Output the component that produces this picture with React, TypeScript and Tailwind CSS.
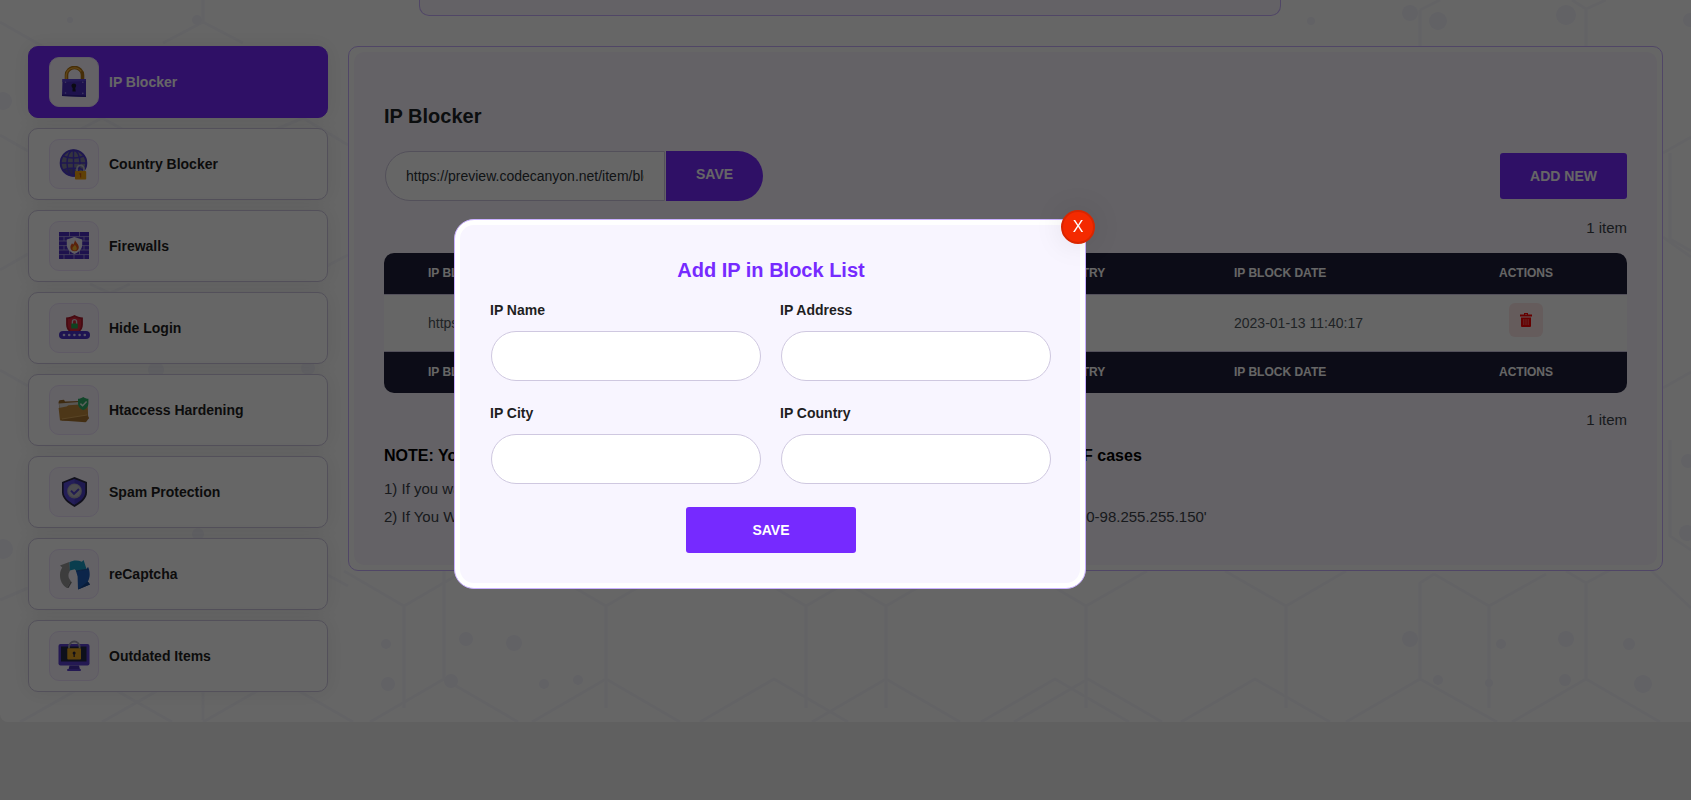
import React, { useState } from 'react';

interface MenuItem {
  id: string;
  label: string;
  icon: React.ReactNode;
}

const PadlockIcon = () => (
  <svg viewBox="0 0 32 32" className="w-8 h-8" aria-hidden="true">
    <path d="M8.5 14V9a8 7.5 0 0 1 16 0v5" fill="none" stroke="#b07414" strokeWidth="3.6" />
    <path d="M8.2 13V9a8.2 7.8 0 0 1 15-3.6" fill="none" stroke="#f0ac3a" strokeWidth="1.4" />
    <path d="M4.5 13H28v18l-24-1z" fill="#4b2fc0" />
    <path d="M4.5 13H28v2l-23.6 1z" fill="#5b41d6" />
    <path d="M4 28.5l24 1V31L4 30z" fill="#33209a" />
    <circle cx="15.8" cy="19.8" r="2.4" fill="#1d1b33" />
    <path d="M14.8 20.5h2.2l.8 5h-3.4z" fill="#1d1b33" />
    <g fill="#9d8cf2">
      <circle cx="7.5" cy="16.2" r=".8" />
      <circle cx="24.8" cy="16.2" r=".8" />
      <circle cx="7.5" cy="27" r=".8" />
      <circle cx="24.8" cy="27.4" r=".8" />
    </g>
  </svg>
);

const GlobeIcon = () => (
  <svg viewBox="0 0 32 32" className="w-8 h-8" aria-hidden="true">
    <circle cx="15.5" cy="15" r="13" fill="#83839c" />
    <path d="M5 22.500a13 13 0 0 0 13 5.500l-1-8z" fill="#3a2fa0" opacity=".6" />
    <g fill="none" stroke="#4d3ac8" strokeWidth="1.5">
      <circle cx="15.5" cy="15" r="12.8" strokeWidth="2" />
      <ellipse cx="15.5" cy="15" rx="6.5" ry="12.8" />
      <path d="M15.5 2v26M2.7 15h25.6M5 8c6 2.6 15 2.6 21 0M5 22c6-2.6 15-2.6 21 0" />
    </g>
    <path d="M19 23.5v-2.7a3.5 3.5 0 0 1 7 0v2.7" fill="none" stroke="#b9b9c6" strokeWidth="1.8" />
    <rect x="17" y="23" width="11.2" height="8.6" rx=".8" fill="#f0a010" />
    <path d="M21.4 25.2h1.8v4.4h-1v-3.2h-.8z" fill="#c04a10" />
  </svg>
);

const FirewallIcon = () => (
  <svg viewBox="0 0 32 32" className="w-8 h-8" aria-hidden="true">
    <rect x="1" y="2" width="30" height="27" fill="#4b2fc0" />
    <path
      d="M1 6.6h30M1 11h30M1 15.6h30M1 20h30M1 24.6h30M11.5 2v4.6M21.5 2v4.6M6 6.6V11M16 6.6V11M26 6.6V11M11.5 11v4.6M21.5 11v4.6M6 15.6V20M26 15.6V20M11.5 20v4.6M21.5 20v4.6M6 24.6V29M16 24.6V29M26 24.6V29"
      stroke="#a79ae0"
      strokeWidth=".9"
    />
    <path d="M16.5 7l7.7 2.6v5.2c0 4.2-3 7.4-7.7 9.2-4.7-1.8-7.7-5-7.7-9.2V9.6z" fill="#eeeaf8" />
    <path d="M17 9.8c.4 2.6 3.8 4 3.8 7.4 0 2.6-1.8 4-4.2 4s-4.2-1.4-4.2-4c0-1.8 1-2.6 1.6-4l1.2 1.2c1-1.2 1.6-2.6 1.8-4.6z" fill="#e0521c" />
    <path d="M17 14.6c.2 1.4 1.8 2.2 1.8 3.8 0 1.4-1 2.2-2.2 2.2s-2.2-.8-2.2-2.2c0-1.6 2-2.2 2.6-3.8z" fill="#f7b733" />
  </svg>
);

const HideLoginIcon = () => (
  <svg viewBox="0 0 32 32" className="w-8 h-8" aria-hidden="true">
    <path d="M16.5 3c2.6 1.6 5.4 2.3 8.4 2.4v7c0 3.2-1.4 6-4 7.8h-8.8c-2.6-1.8-4-4.6-4-7.8v-7c3-.1 5.8-.8 8.4-2.4z" fill="#b01c2e" />
    <path d="M16.5 5c2 1.2 4.2 1.8 6.6 2v5.6c0 2.8-1.2 5-3 6.600h-7.200c-1.800-1.600-3-3.800-3-6.600V7c2.400-.2 4.600-.8 6.600-2z" fill="#d92a3e" />
    <path d="M14.4 12V9.800a2.100 2.100 0 0 1 4.200 0V12" fill="none" stroke="#d5d5dd" strokeWidth="1.300" />
    <rect x="13.200" y="11.500" width="6.600" height="5" rx=".6" fill="#22a854" />
    <rect x="1" y="19" width="31" height="8" rx="4" fill="#4b33cc" />
    <g fill="#d8d2fa">
      <circle cx="6" cy="23" r="1.300" />
      <circle cx="11.200" cy="23" r="1.300" />
      <circle cx="16.400" cy="23" r="1.300" />
      <circle cx="21.600" cy="23" r="1.300" />
      <circle cx="26.800" cy="23" r="1.300" />
    </g>
  </svg>
);

const FolderIcon = () => (
  <svg viewBox="0 0 32 32" className="w-8 h-8" aria-hidden="true">
    <path d="M.5 8l1-1.800 4.500-.4 1 1.600 21-.6 2.500 18-27 2z" fill="#9a6a2a" />
    <path d="M1 9.500l26-2 1 5-26.500 2z" fill="#dcd6d0" />
    <path d="M.6 14l8-1.400 2-1.400 19-1.200.6 14.600L2 26.500z" fill="#c08a3c" />
    <path d="M2 25.500L29 21l2 3-2.500 3.500-1 .8L7 26.800z" fill="#a87430" />
    <path d="M4 25l25-4" stroke="#e4b264" strokeWidth=".8" />
    <path d="M25.200 3c1.600 1.200 3.400 1.700 5.200 1.800v4.600c0 3.200-2 5.400-5.200 6.800-3.200-1.400-5.200-3.600-5.200-6.800V4.800c1.800-.1 3.600-.6 5.200-1.800z" fill="#2fae6a" />
    <path d="M22.400 9.600l2.200 2.200 4-4.200" fill="none" stroke="#e4f4ea" strokeWidth="1.500" />
  </svg>
);

const SpamIcon = () => (
  <svg viewBox="0 0 32 32" className="w-8 h-8" aria-hidden="true">
    <path d="M16.500 1l12.500 5v10.500c0 6-6 11-12.500 14.500C10 27.500 4 22.500 4 16.500V6z" fill="#2c2a48" />
    <path d="M16.500 3l10.700 4.300v9c0 5-5 9.200-10.700 12.400C10.800 25.500 5.800 21.300 5.800 16.300v-9z" fill="#4d40c8" />
    <path d="M16.500 3v25.700C10.800 25.500 5.800 21.300 5.800 16.300v-9z" fill="#5a4cdc" />
    <circle cx="16.500" cy="15" r="7.400" fill="#a9a9b4" />
    <circle cx="16.500" cy="14.800" r="6.200" fill="#bcbcc6" />
    <path d="M13 14.600l3 3.200 5-4.800" fill="none" stroke="#5344cc" strokeWidth="2" />
  </svg>
);

const RecaptchaIcon = () => (
  <svg viewBox="0 0 32 32" className="w-8 h-8" aria-hidden="true">
    <path d="M2 7.500L11.200 4l.8 8.500-1.400 3.200c-.6 3 .4 5 2.200 7.300L9 30C4.500 27.500 1.800 22.500 2 17c0-3 .8-5.200 2.200-7.400z" fill="#9a9a98" />
    <path d="M9 30l3.800-7 1 1.600L10.500 30z" fill="#77777a" />
    <path d="M11.400 4.200c4-2.200 8.600-2.200 12.400-.4L25.600 2l3 9.200-10.400 1.800-1.400-1.800-5 1.400z" fill="#1b9cc4" />
    <path d="M18 13l10.600-1.800L30 8.800c2.200 4.600 2.400 10-.2 14.800l2.200 3-12 4.800-.4-13z" fill="#1f5db8" />
    <path d="M29.800 23.600l2.200 3-12 4.800z" fill="#17468f" />
    <path d="M18 13l12-2" stroke="#17468f" strokeWidth=".8" />
  </svg>
);

const OutdatedIcon = () => (
  <svg viewBox="0 0 32 32" className="w-8 h-8" aria-hidden="true">
    <rect x=".5" y="4" width="31" height="21.500" rx="2" fill="#5b3fd0" />
    <rect x="3" y="6.500" width="25.500" height="15" fill="#252a44" />
    <path d="M11.500 25.500h9.500l1 4H10.500z" fill="#4730ae" />
    <rect x="9" y="29" width="14" height="2" rx="1" fill="#5b3fd0" />
    <path d="M11 8.500V6.800a5.300 5.300 0 0 1 10.600 0v1.700" fill="none" stroke="#9d9bb0" strokeWidth="1.800" />
    <rect x="9.300" y="8.300" width="13.700" height="11.200" rx=".8" fill="#e5a41f" />
    <circle cx="16.100" cy="13" r="1.500" fill="#2a2538" />
    <path d="M15.500 13.500h1.300v3.500h-1.300z" fill="#2a2538" />
  </svg>
);

const menuItems: MenuItem[] = [
  { id: 'ip', label: 'IP Blocker', icon: <PadlockIcon /> },
  { id: 'country', label: 'Country Blocker', icon: <GlobeIcon /> },
  { id: 'firewalls', label: 'Firewalls', icon: <FirewallIcon /> },
  { id: 'hide-login', label: 'Hide Login', icon: <HideLoginIcon /> },
  { id: 'htaccess', label: 'Htaccess Hardening', icon: <FolderIcon /> },
  { id: 'spam', label: 'Spam Protection', icon: <SpamIcon /> },
  { id: 'recaptcha', label: 'reCaptcha', icon: <RecaptchaIcon /> },
  { id: 'outdated', label: 'Outdated Items', icon: <OutdatedIcon /> },
];

const fields = [
  { id: 'ip-name', label: 'IP Name' },
  { id: 'ip-address', label: 'IP Address' },
  { id: 'ip-city', label: 'IP City' },
  { id: 'ip-country', label: 'IP Country' },
];

// Faint honeycomb behind the page content
const HexBackdrop = () => (
  <svg className="absolute inset-0 w-full h-full" viewBox="0 0 1691 722" preserveAspectRatio="xMidYMax slice" aria-hidden="true">
    <g fill="none" stroke="#f8f8fd" strokeWidth="3">
      <path d="M344 571l60 35 60-35M404 606v102M546 571l60 35 60-35M606 606v102M746 571l60 35 60-35M806 606v102M886 606v102M826 571l60 35 60-35M1027 571l59 35 61-35M1086 606v102M1225 571l61 35 60-35M1286 606v102M1434 574l55 32 57-32M1489 606v102" />
      <path d="M370 722l74-43 74 43M444 679V571M532 722l74-43 74 43M700 722l74-43 74 43M812 722l74-43 74 43M981 722l74-43 74 43M1014 722l74-43 74 43M1181 722l74-43 75 43M1346 722l74-43 77 43M1420 679v-96l14-9M1512 722l74-43 74 43M1586 679v-96l-20-12M1586 583l26-14M1640 560l51 48" />
      <path d="M20 722l76-43 76 43M102 722l76-43M203 722l75-43 75 43M203 720v-30M0 22l70 40M203 22l40 21M203 22l-40 21M203 22V0M0 135l28 16M60 140l42-22 40 22M250 140l53-22 45 27M0 270l28-16M300 280l48-25M0 370l28 16M0 600l28-12M90 284l20 9 20-9M300 560l48 26" />
      <path d="M1420 10l20-10M1420 10v36M1586 9l-14-9M1586 9l20-9M1586 9v37M1663 153l28-16M1670 153v86l21 12M1663 237l28 20M1663 388l28-16M1670 440v96l21 14" />
    </g>
    <g fill="#f5f5fd">
      <circle cx="386" cy="644" r="5" />
      <circle cx="466" cy="639" r="7" />
      <circle cx="514" cy="643" r="8" />
      <circle cx="388" cy="684" r="7" />
      <circle cx="451" cy="681" r="7" />
      <circle cx="544" cy="684" r="5" />
      <circle cx="578" cy="680" r="5" />
      <circle cx="1410" cy="639" r="8" />
      <circle cx="1501" cy="644" r="5" />
      <circle cx="1566" cy="639" r="8" />
      <circle cx="1629" cy="644" r="6" />
      <circle cx="1643" cy="684" r="9" />
      <circle cx="1438" cy="680" r="5" />
      <circle cx="1489" cy="683" r="4" />
      <circle cx="1565" cy="680" r="6" />
      <circle cx="1311" cy="21" r="4" />
      <circle cx="1410" cy="13" r="8" />
      <circle cx="1438" cy="21" r="9" />
      <circle cx="1566" cy="15" r="10" />
      <circle cx="1690" cy="20" r="7" />
      <circle cx="1688" cy="461" r="7" />
      <circle cx="1687" cy="533" r="8" />
      <circle cx="197" cy="20" r="5" />
      <circle cx="70" cy="20" r="3" />
      <circle cx="3" cy="101" r="9" />
      <circle cx="156" cy="370" r="8" />
      <circle cx="308" cy="368" r="7" />
      <circle cx="3" cy="549" r="10" />
      <circle cx="198" cy="534" r="6" />
    </g>
  </svg>
);

const TableHeadings = () => (
  <tr className="bg-[#20203a] text-left text-xs leading-5 text-white uppercase">
    <th className="h-[41px] pb-0.5 pl-11">IP Block Name</th>
    <th className="pb-0.5 pl-5">IP Address</th>
    <th className="pb-0.5 pl-5">IP City</th>
    <th className="w-[202px] pb-0.5 pl-5">IP Country</th>
    <th className="w-[213px] pb-0.5 pl-5">IP Block Date</th>
    <th className="w-[200px] pr-0.5 pb-0.5 text-center">Actions</th>
  </tr>
);

const App: React.FC = () => {
  const [active, setActive] = useState('ip');
  const [showModal, setShowModal] = useState(true);
  const [url, setUrl] = useState('https://preview.codecanyon.net/item/blocker');

  return (
    <div className="min-h-screen bg-[#f0f0f1] font-['Liberation_Sans',Arial,sans-serif] text-[#3c434a]">
      <div className="relative overflow-hidden rounded-bl-lg bg-white pb-[30px]">
        <HexBackdrop />
        <div className="relative">
          <div className="flex justify-center pl-2">
            <div className="h-4 w-[862px] rounded-b-[10px] border border-t-0 border-[#c9b0ff] bg-[#faf5ff]" />
          </div>

          <div className="mt-[30px] flex items-start gap-5 px-7">
            {/* Sidebar */}
            <nav className="flex w-[300px] shrink-0 flex-col gap-2.5">
              {menuItems.map((item) => (
                <a
                  key={item.id}
                  href={`#${item.id}`}
                  onClick={() => setActive(item.id)}
                  className={`flex h-[72px] items-center gap-2.5 rounded-[10px] border px-5 text-sm font-bold shadow-[0_0_20px_rgba(0,0,0,0.08)] ${active === item.id ? 'border-[#762aff] bg-[#762aff] text-white' : 'border-[#cfc8e0] bg-white text-[#1f1f1f]'}`}
                >
                  <span className="flex h-[50px] w-[50px] items-center justify-center rounded-[10px] border border-[#eee2fc] bg-[#faf5ff]">
                    {item.icon}
                  </span>
                  {item.label}
                </a>
              ))}
            </nav>

            {/* Main panel */}
            <main className="min-w-0 flex-1 rounded-[10px] border border-[#c9b0ff] bg-white p-[5px]">
              <div className="rounded-[10px] bg-[#faf5ff] px-[30px] pt-[52px] pb-[34px]">
                <h1 className="text-xl leading-6 font-bold text-[#1d2327]">IP Blocker</h1>

                <div className="mt-[23px] flex items-center justify-between">
                  <form className="flex pl-px" onSubmit={(e) => e.preventDefault()}>
                    <input
                      type="text"
                      aria-label="Site URL"
                      value={url}
                      onChange={(e) => setUrl(e.target.value)}
                      className="h-[50px] w-[280px] rounded-l-full border border-[#cfc8e0] bg-white px-5 text-sm text-[#2c3338] outline-none"
                    />
                    <button type="submit" className="ml-px h-[50px] rounded-r-full bg-[#762aff] px-[30px] pb-1 text-sm font-bold text-white">
                      SAVE
                    </button>
                  </form>
                  <button
                    type="button"
                    onClick={() => setShowModal(true)}
                    className="h-[46px] rounded-[3px] bg-[#762aff] px-[30px] text-sm font-bold text-white"
                  >
                    ADD NEW
                  </button>
                </div>

                <p className="mt-[17px] text-right text-[15px] leading-5">1 item</p>

                <div className="mt-[15px] overflow-hidden rounded-[10px]">
                  <table className="w-full table-fixed border-collapse">
                    <thead>
                      <TableHeadings />
                    </thead>
                    <tbody>
                      <tr className="bg-white text-sm text-[#50575e] shadow-[inset_0_1px_0_#cfc8e0,inset_0_-1px_0_#cfc8e0]">
                        <td className="h-[58px] truncate pl-11">https://preview</td>
                        <td className="pl-5">98.255.255.1</td>
                        <td className="pl-5">-</td>
                        <td className="pl-5">-</td>
                        <td className="pl-5">2023-01-13 11:40:17</td>
                        <td className="pr-0.5 pb-1.5">
                          <button type="button" aria-label="Delete" className="mx-auto flex h-[34px] w-[34px] items-center justify-center rounded-md bg-[#fce6e6]">
                            <svg viewBox="0 0 12 14" className="h-3.5 w-3" aria-hidden="true">
                              <path d="M4 1.500V0h4v1.500h4v2H0v-2zM1 4.500h10V13a1 1 0 0 1-1 1H2a1 1 0 0 1-1-1z" fill="#ff0000" />
                              <path d="M5 1.500V1h2v.5z" fill="#fce6e6" />
                              <path d="M3.800 6v6M6 6v6M8.200 6v6" stroke="#fc8080" strokeWidth=".8" />
                            </svg>
                          </button>
                        </td>
                      </tr>
                    </tbody>
                    <tfoot>
                      <TableHeadings />
                    </tfoot>
                  </table>
                </div>

                <p className="mt-[17px] text-right text-[15px] leading-5">1 item</p>

                <h2 className="mt-3.5 text-base leading-6 font-bold text-black">
                  NOTE: You can add multiple IP addresses or an IP range to the IP block list in the following IF cases
                </h2>
                <ul className="mt-[7px] text-[15px] leading-7">
                  <li>1) If you want to block a single IP address then enter '98.255.255.100'</li>
                  <li>2) If You Want To Block A Range Of IP Addresses Then You Can Enter The IP Address like '98.255.255.100-98.255.255.150'</li>
                </ul>
              </div>
            </main>
          </div>
        </div>
      </div>

      {showModal && (
        <div className="fixed inset-0 bg-black/60">
          <div
            role="dialog"
            aria-labelledby="modal-title"
            className="absolute top-[219px] left-[454px] w-[632px] rounded-[20px] border border-[#c9b0ff] bg-white p-[5px]"
          >
            <form className="rounded-[14px] bg-[#f8f5ff] pt-[33px] pr-7 pb-[30px] pl-[30px]" onSubmit={(e) => e.preventDefault()}>
              <h2 id="modal-title" className="text-center text-xl leading-6 font-bold text-[#762aff]">
                Add IP in Block List
              </h2>
              <div className="mt-[18px] grid grid-cols-2 gap-x-[18px] gap-y-[22px]">
                {fields.map((field) => (
                  <div key={field.id}>
                    <label htmlFor={field.id} className="block text-sm font-bold text-[#1f1f1f]">
                      {field.label}
                    </label>
                    <div className="mt-[11px] px-px">
                      <input
                        id={field.id}
                        type="text"
                        className="block h-[50px] w-full rounded-full border border-[#cfc8e0] bg-white px-5 text-sm outline-none"
                      />
                    </div>
                  </div>
                ))}
              </div>
              <button type="submit" className="mx-auto mt-[23px] block h-[46px] w-[170px] rounded-[3px] bg-[#762aff] text-sm font-bold text-white">
                SAVE
              </button>
            </form>
            <button
              type="button"
              onClick={() => setShowModal(false)}
              className="absolute -top-2.5 -right-2.5 h-[34px] w-[34px] rounded-full border-2 border-[#d92600] bg-[#f42a00] text-base text-white shadow-[0_0_30px_rgba(0,0,0,0.1)]"
            >
              X
            </button>
          </div>
        </div>
      )}
    </div>
  );
};

export default App;
